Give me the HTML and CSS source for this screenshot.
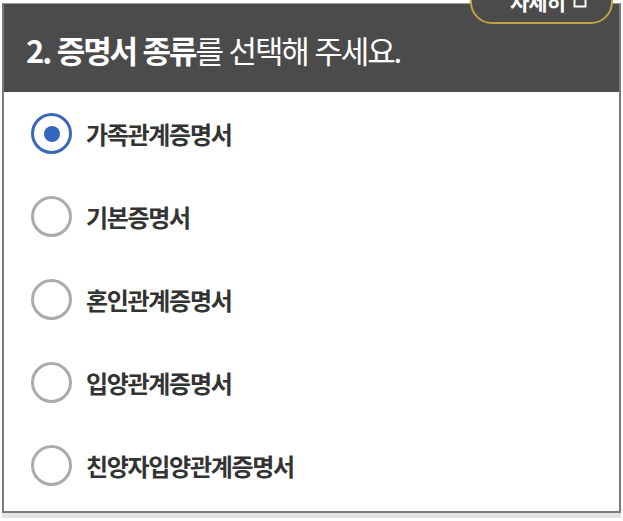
FILE: index.html
```html
<!DOCTYPE html>
<html lang="ko">

<head>
     <meta charset="UTF-8">
     <meta name="viewport" content="width=device-width, initial-scale=1.0">
     <title>증명서 종류 선택</title>
     <link rel="stylesheet" href="styles.css">
</head>

<body>

     <div id="wrapper">
          <div class="cert-panel">
               <div class="cert-title">
                    <h2><strong>2. 증명서 종류</strong>를 선택해 주세요.</h2>
                    <button class="more-btn">
                         <span>자세히</span>
                         <svg width="14" height="14" viewBox="0 0 14 14">
                              <rect x="1.5" y="1.5" width="11" height="11" fill="none" stroke="#fff" stroke-width="2" />
                         </svg>
                    </button>
               </div>
               <ul class="cert-list">
                    <li class="cert-item">
                         <span class="radio checked"></span>
                         <span class="cert-name">가족관계증명서</span>
                    </li>
                    <li class="cert-item">
                         <span class="radio"></span>
                         <span class="cert-name">기본증명서</span>
                    </li>
                    <li class="cert-item">
                         <span class="radio"></span>
                         <span class="cert-name">혼인관계증명서</span>
                    </li>
                    <li class="cert-item">
                         <span class="radio"></span>
                         <span class="cert-name">입양관계증명서</span>
                    </li>
                    <li class="cert-item">
                         <span class="radio"></span>
                         <span class="cert-name">친양자입양관계증명서</span>
                    </li>
               </ul>
          </div>
     </div>

</body>

</html>
```

FILE: styles.css
```css
* {
     padding: 0;
     margin: 0;
     box-sizing: border-box;
     font-family: 'Noto Sans CJK KR', 'Noto Sans', sans-serif;
}

html,
body {
     width: 100%;
     height: 100%;
     background: #fff;
     overflow: hidden;
}

#wrapper {
     padding: 3px 2px 0 2px;
}

.cert-panel {
     width: 619px;
     border: 2px solid #7a7a7a;
     border-top: 1px solid #9a9a9a;
     background: #fff;
     box-shadow: 0 5px 0 #e4e4e4;
}

.cert-title {
     position: relative;
     height: 88px;
     background: #4b4b4b;
     display: flex;
     align-items: center;
     padding-left: 22px;
}

.cert-title h2 {
     color: #fff;
     font-size: 31px;
     font-weight: 400;
     letter-spacing: -2.1px;
     line-height: 1;
     margin-top: 2px;
}

.cert-title h2 strong {
     font-weight: 700;
}

.more-btn {
     position: absolute;
     top: -28px;
     right: 6px;
     width: 143px;
     height: 48px;
     border-radius: 22px;
     border: 2px solid #bfa443;
     background: #4b4b4b;
     color: #fff;
     display: flex;
     align-items: center;
     justify-content: center;
     gap: 8px;
     font-size: 21px;
     font-weight: 700;
     letter-spacing: -1px;
     padding-left: 14px;
     padding-top: 2px;
     cursor: pointer;
}

.cert-list {
     list-style: none;
     padding-bottom: 4px;
}

.cert-item {
     height: 83px;
     display: flex;
     align-items: center;
     padding-left: 27px;
     gap: 14px;
}

.radio {
     width: 41px;
     height: 41px;
     border-radius: 50%;
     border: 3px solid #ababab;
     display: flex;
     align-items: center;
     justify-content: center;
     flex-shrink: 0;
}

.radio.checked {
     border-color: #3a68b8;
}

.radio.checked::after {
     content: "";
     width: 16px;
     height: 16px;
     border-radius: 50%;
     background: #3566c2;
}

.cert-name {
     font-size: 24px;
     font-weight: 700;
     color: #333;
     letter-spacing: -1.3px;
}
```
